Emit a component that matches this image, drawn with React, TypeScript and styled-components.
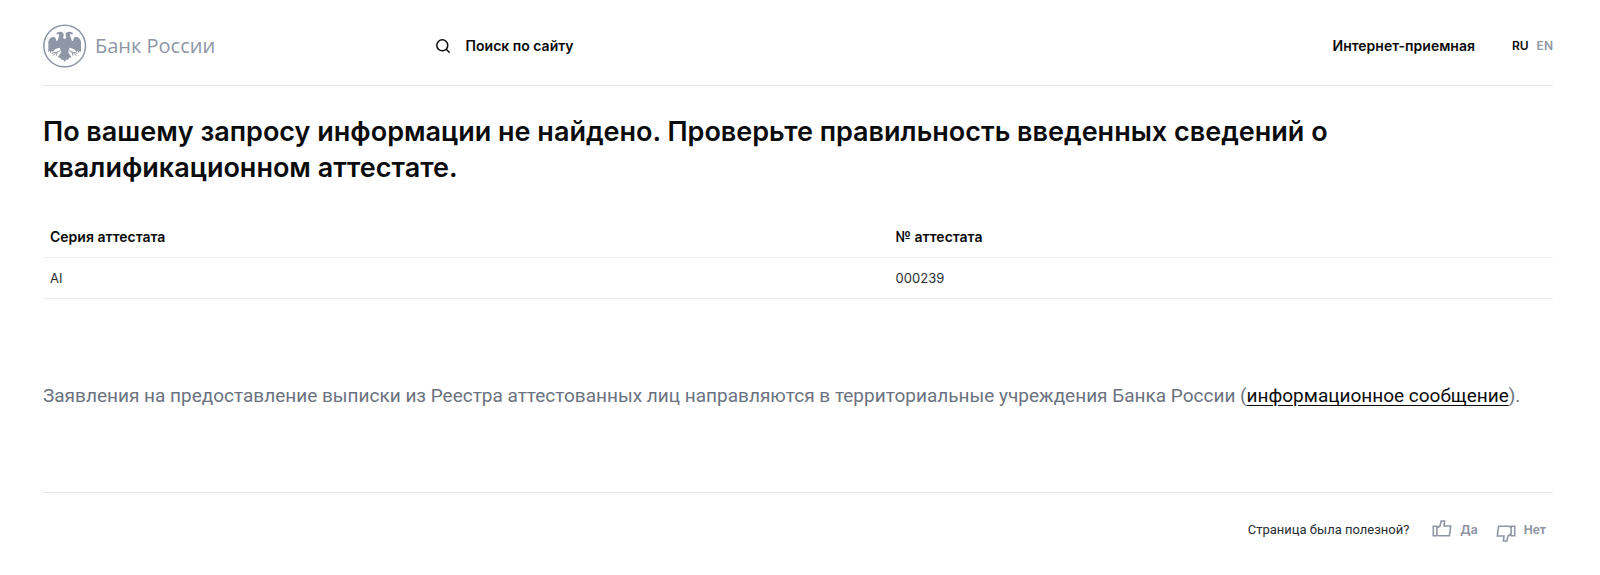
import React from "react";
import styled, { createGlobalStyle } from "styled-components";

const GlobalStyle = createGlobalStyle`
  *, *::before, *::after { box-sizing: border-box; }
  body {
    margin: 0;
    background: #fff;
    color: #0a0b0c;
    font-family: Inter, "Noto Sans", "Liberation Sans", sans-serif;
    font-size: 14px;
    line-height: 20px;
  }
`;

const Page = styled.div`
  padding: 0 47px 0 43px;
`;

const Header = styled.header`
  display: flex;
  align-items: center;
  height: 86px;
  padding-bottom: 7px;
  padding-top: 14px;
  border-bottom: 1px solid #e6e7e9;
`;

const Logo = styled.a`
  display: flex;
  align-items: center;
  gap: 8px;
  width: 26%;
  color: #8f96a5;
  font-family: "Open Sans", "Noto Sans", sans-serif;
  font-size: 20px;
  line-height: 28px;
  white-space: nowrap;
  text-decoration: none;
`;

const Search = styled.button`
  display: flex;
  align-items: center;
  gap: 16px;
  padding: 0;
  border: 0;
  background: none;
  color: inherit;
  font: inherit;
  font-weight: 600;
  cursor: pointer;
`;

const Nav = styled.nav`
  display: flex;
  align-items: center;
  gap: 37px;
  margin-left: auto;
`;

const NavLink = styled.a`
  color: inherit;
  font-weight: 600;
  text-decoration: none;
`;

const Languages = styled.div`
  display: flex;
  gap: 8px;
`;

const Language = styled.a<{ $muted?: boolean }>`
  color: ${(p) => (p.$muted ? "#8f96a5" : "#0a0b0c")};
  font-size: 12px;
  font-weight: 600;
  text-decoration: none;
`;

const Title = styled.h1`
  margin: 0;
  padding: 28px 160px 31px 0;
  font-size: 27px;
  font-weight: 600;
  line-height: 36px;
`;

const Table = styled.table`
  width: 100%;
  border-collapse: separate;
  border-spacing: 0;
  table-layout: fixed;
`;

const HeadCell = styled.th`
  height: 41px;
  padding: 0 7px;
  border-bottom: 1px solid #ececee;
  font-weight: 600;
  text-align: left;

  &:first-child { width: 56%; }
`;

const Cell = styled.td`
  height: 41px;
  padding: 0 7px;
  border-bottom: 1px solid #ececee;
  color: #2b2d33;
  font-size: 13px;
`;

const Note = styled.p`
  margin: 0;
  padding: 83px 0 82px;
  color: #6b7280;
  font-family: Roboto, Inter, sans-serif;
  font-size: 19px;
  line-height: 28px;
`;

const NoteLink = styled.a`
  color: #0a0b0c;
  text-underline-offset: 3px;
`;

const Footer = styled.footer`
  display: flex;
  align-items: center;
  justify-content: flex-end;
  padding: 27px 7px 27px 0;
  border-top: 1px solid #e6e7e9;
  font-size: 12px;
`;

const Question = styled.span`
  margin-right: 23px;
  color: #2b2d33;
  font-family: Roboto, Inter, sans-serif;
  font-size: 13px;
`;

const Vote = styled.button`
  display: flex;
  align-items: center;
  gap: 8px;
  padding: 0;
  border: 0;
  background: none;
  color: #8f96a5;
  font: inherit;
  font-weight: 700;
  cursor: pointer;

  & + & { margin-left: 18px; }
`;

const Drawing = styled.svg`
  flex: none;
  overflow: visible;
`;

function Emblem() {
  return (
    <Drawing width="44" height="44" viewBox="21 24 132 132" fill="none" aria-hidden="true">
      <circle cx="86" cy="90" r="62.5" stroke="currentColor" strokeWidth="4.6" />
      <path
        fill="currentColor"
        d="M60 55Q62 48 70 47Q81 46 83 54Q84 60 81 65Q83 68 86 68Q89 68 91 65Q88 60 89 54Q91 46 102 47Q110 48 112 55L104 54Q101 57 103 61L107 73Q108 76 111 75Q112 64 119 62Q132 64 135 77L135 109L131 104L129 112L125 105L121 108L117 101L108 97L101 95Q96 103 98 112L107 124Q98 124 97 131Q91 128 86 137Q81 128 75 131Q74 124 65 124L74 112Q76 103 71 95L64 97L55 101L51 108L47 105L43 112L41 104L37 109L37 77Q40 64 53 62Q60 64 61 75Q64 76 65 73L69 61Q71 57 68 54Z"
      />
      <path
        stroke="currentColor"
        strokeWidth="3"
        d="M73 104L61 109L47 112M61 109L51 119M64 108L61 119M99 104L111 109L125 112M111 109L121 119M108 108L111 119"
      />
    </Drawing>
  );
}

function SearchIcon() {
  return (
    <Drawing width="14" height="14" viewBox="0 0 14 14" fill="none" stroke="currentColor" strokeWidth="1.5" aria-hidden="true">
      <circle cx="6.3" cy="6.3" r="5.5" />
      <path d="M10.2 10.2L13.6 13.6" />
    </Drawing>
  );
}

function Thumb({ down = false }: { down?: boolean }) {
  return (
    <Drawing width="20" height="20" viewBox="0 0 20 20" fill="none" stroke="currentColor" strokeWidth="1.6" aria-hidden="true">
      <g transform={down ? "rotate(180 10 10) translate(0 -3)" : "translate(0 -1)"}>
        <path d="M1.3 7.3H4.9V16.8H1.3ZM4.9 9L8 7L9.2 2H12.6L12 7H18.7L17.4 16.8H7L4.9 15.4" />
      </g>
    </Drawing>
  );
}

export default function App() {
  return (
    <>
      <GlobalStyle />
      <Page>
        <Header>
          <Logo href="#">
            <Emblem />
            Банк России
          </Logo>
          <Search type="button">
            <SearchIcon />
            Поиск по сайту
          </Search>
          <Nav>
            <NavLink href="#">Интернет-приемная</NavLink>
            <Languages>
              <Language href="#">RU</Language>
              <Language href="#" $muted>EN</Language>
            </Languages>
          </Nav>
        </Header>
        <main>
          <Title>
            По вашему запросу информации не найдено. Проверьте правильность введенных сведений о
            квалификационном аттестате.
          </Title>
          <Table>
            <thead>
              <tr>
                <HeadCell scope="col">Серия аттестата</HeadCell>
                <HeadCell scope="col">№ аттестата</HeadCell>
              </tr>
            </thead>
            <tbody>
              <tr>
                <Cell>AI</Cell>
                <Cell>000239</Cell>
              </tr>
            </tbody>
          </Table>
          <Note>
            Заявления на предоставление выписки из Реестра аттестованных лиц направляются в территориальные
            учреждения Банка России (<NoteLink href="#">информационное сообщение</NoteLink>).
          </Note>
        </main>
        <Footer>
          <Question>Страница была полезной?</Question>
          <Vote type="button">
            <Thumb />
            Да
          </Vote>
          <Vote type="button">
            <Thumb down />
            Нет
          </Vote>
        </Footer>
      </Page>
    </>
  );
}
